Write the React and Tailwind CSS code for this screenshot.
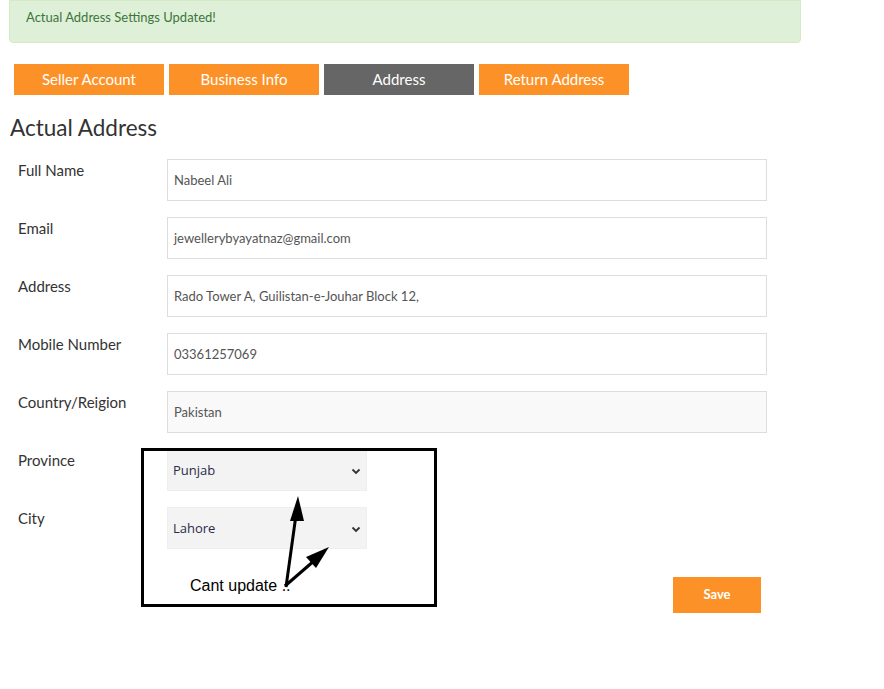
import React from "react";

const font = { fontFamily: "Lato, 'Open Sans', sans-serif" };

function Row({ label, children }) {
  return (
    <div className="flex h-[58px]">
      <div className="w-[157px] pl-[8px] pt-[1px] text-[15px] text-[#333] leading-[20px]">{label}</div>
      {children}
    </div>
  );
}

function Input({ value, disabled }) {
  return (
    <div
      className={`w-[600px] h-[42px] border border-[#ddd] flex items-center pl-[6px] pt-[1px] text-[13px] text-[#555] ${disabled ? "bg-[#f9f9f9]" : "bg-white"}`}
    >
      {value}
    </div>
  );
}

function Select({ value }) {
  return (
    <div className="w-[200px] h-[42px] bg-[#f3f3f3] border border-[#eee] flex items-center justify-between pl-[5px] pr-[4px] pt-[1px] text-[13px] text-[#2b2b4a]" style={{ fontFamily: "'Open Sans', sans-serif" }}>
      <span>{value}</span>
      <svg width="12" height="12" viewBox="0 0 12 12">
        <path d="M2.5 4.5 L6 8 L9.5 4.5" fill="none" stroke="#333" strokeWidth="1.8" />
      </svg>
    </div>
  );
}

export default function App() {
  return (
    <div className="relative w-[884px] h-[689px] bg-white" style={font}>
      <div className="mx-[9px] w-[792px] h-[43px] bg-[#dff0d8] border border-[#d6e9c6] rounded-b-[4px] flex items-center pl-[16px] pb-[8px] text-[13px] text-[#3c763d]">
        Actual Address Settings Updated!
      </div>
      <div className="flex gap-[5px] ml-[14px] mt-[21px]">
        {["Seller Account", "Business Info", "Address", "Return Address"].map((t) => (
          <div
            key={t}
            className={`w-[150px] h-[31px] flex items-center justify-center text-white text-[15px] ${t === "Address" ? "bg-[#666666]" : "bg-[#fc9227]"}`}
          >
            {t}
          </div>
        ))}
      </div>
      <h2 className="ml-[10px] mt-[20px] text-[22.5px] leading-[26px] text-[#333]">Actual Address</h2>
      <div className="mt-[18px] ml-[10px]">
        <Row label="Full Name"><Input value="Nabeel Ali" /></Row>
        <Row label="Email"><Input value="jewellerybyayatnaz@gmail.com" /></Row>
        <Row label="Address"><Input value="Rado Tower A, Guilistan-e-Jouhar Block 12," /></Row>
        <Row label="Mobile Number"><Input value="03361257069" /></Row>
        <Row label="Country/Reigion"><Input value="Pakistan" disabled /></Row>
        <Row label="Province"><Select value="Punjab" /></Row>
        <Row label="City"><Select value="Lahore" /></Row>
      </div>
      <div className="flex justify-end w-[761px] mt-[12px]">
        <div className="w-[88px] h-[36px] bg-[#fc9227] text-white font-bold text-[13px] flex items-center justify-center">Save</div>
      </div>

      {/* annotation overlay */}
      <div className="absolute left-[141px] top-[448px] w-[296px] h-[159px] border-[3px] border-black"></div>
      <div className="absolute left-[190px] top-[576px] text-[16px] text-black leading-[20px]" style={{ fontFamily: "Arial, 'Liberation Sans', sans-serif" }}>
        Cant update ..
      </div>
      <svg className="absolute left-0 top-0 pointer-events-none" width="884" height="689">
        <line x1="286" y1="587" x2="296" y2="515" stroke="black" strokeWidth="3" />
        <polygon points="298,496 290,521 304,521" fill="black" />
        <line x1="285" y1="586" x2="315" y2="560" stroke="black" strokeWidth="3" />
        <polygon points="329,547 306,557 316,568" fill="black" />
      </svg>
    </div>
  );
}
